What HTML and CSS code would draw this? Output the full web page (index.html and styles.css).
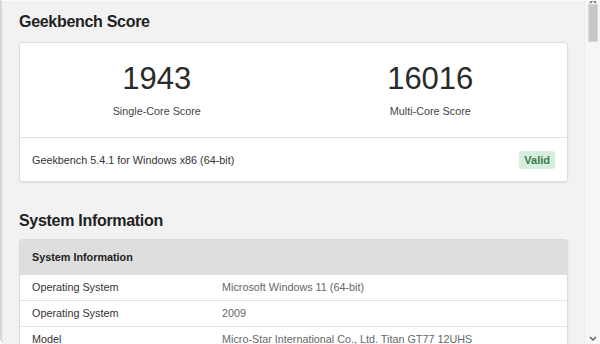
FILE: index.html
```html
<!DOCTYPE html>
<html lang="en">
<head>
  <meta charset="UTF-8">
  <title>Geekbench Score</title>
  <link rel="stylesheet" href="styles.css">
</head>
<body>
  <div class="window">
    <div class="page">
      <h2 class="section-title">Geekbench Score</h2>
      <div class="card">
        <div class="scores">
          <div class="score">
            <div class="score-value">1943</div>
            <div class="score-label">Single-Core Score</div>
          </div>
          <div class="score">
            <div class="score-value">16016</div>
            <div class="score-label">Multi-Core Score</div>
          </div>
        </div>
        <div class="card-footer">
          <span>Geekbench 5.4.1 for Windows x86 (64-bit)</span>
          <span class="badge">Valid</span>
        </div>
      </div>

      <h2 class="section-title second">System Information</h2>
      <div class="card info">
        <div class="info-head">System Information</div>
        <div class="info-row">
          <div class="info-name">Operating System</div>
          <div class="info-value">Microsoft Windows 11 (64-bit)</div>
        </div>
        <div class="info-row">
          <div class="info-name">Operating System</div>
          <div class="info-value">2009</div>
        </div>
        <div class="info-row">
          <div class="info-name">Model</div>
          <div class="info-value">Micro-Star International Co., Ltd. Titan GT77 12UHS</div>
        </div>
      </div>
    </div>
    <div class="scrollbar">
      <svg class="arrow" width="8" height="5" viewBox="0 0 8 5"><path d="M1 4 L4 1 L7 4" fill="none" stroke="#555" stroke-width="1.3"/></svg>
      <div class="thumb"></div>
      <div class="track"></div>
      <svg class="arrow" width="8" height="5" viewBox="0 0 8 5"><path d="M1 1 L4 4 L7 1" fill="none" stroke="#555" stroke-width="1.3"/></svg>
    </div>
  </div>
</body>
</html>
```

FILE: styles.css
```css
html,body{
  margin:0;
  padding:0;
}
body{
  width:600px;
  height:344px;
  overflow:hidden;
  font-family:"Liberation Sans", Arial, sans-serif;
  color:#333;
  background:#fff;
}
.window{
  display:flex;
  height:344px;
  border-left:2px solid #d6d6d6;
  border-top:1px solid #fbfbfb;
  border-bottom-left-radius:6px;
  background:#f2f2f2;
  box-sizing:border-box;
  overflow:hidden;
}
.page{
  flex:1;
  padding:11px 16px 0 17px;
  min-width:0;
}
.section-title{
  margin:0 0 10px;
  font-size:16px;
  line-height:20px;
  letter-spacing:-0.3px;
  font-weight:bold;
  color:#222;
}
.section-title.second{
  margin-top:29px;
  margin-bottom:8px;
}
.card{
  background:#fff;
  border:1px solid #dcdcdc;
  border-radius:3px;
  box-shadow:0 1px 2px rgba(0,0,0,.08);
}
.scores{
  display:grid;
  grid-template-columns:1fr 1fr;
  padding:18px 0;
  border-bottom:1px solid #e2e2e2;
}
.score{
  text-align:center;
}
.score-value{
  font-size:31px;
  line-height:36px;
  color:#2a2a2a;
}
.score-label{
  margin-top:6px;
  font-size:10.8px;
  line-height:16px;
  color:#444;
}
.card-footer{
  display:flex;
  align-items:center;
  justify-content:space-between;
  height:43px;
  padding:0 12px;
  font-size:10.8px;
  color:#333;
}
.badge{
  background:#d5efdc;
  color:#3b7a4b;
  font-weight:bold;
  font-size:11px;
  line-height:18px;
  padding:0 5px;
  border-radius:3px;
}
.info{
  overflow:hidden;
}
.info-head{
  background:#dedede;
  height:35px;
  line-height:35px;
  padding:0 12px;
  font-size:10.8px;
  font-weight:bold;
  color:#222;
}
.info-row{
  display:grid;
  grid-template-columns:190px 1fr;
  height:25px;
  line-height:25px;
  padding:0 12px;
  font-size:10.8px;
  border-top:1px solid #e3e3e3;
}
.info-row:nth-child(2){
  border-top:none;
}
.info-name{
  color:#333;
}
.info-value{
  color:#666;
}
.scrollbar{
  width:15px;
  display:flex;
  flex-direction:column;
  align-items:center;
  background:#f6f6f6;
  border-left:1px solid #ececec;
}
.arrow{
  flex:none;
  margin:-2px 0 0;
}
.thumb{
  flex:none;
  width:10px;
  height:38px;
  background:#c6c6c6;
  border:1px solid #d8d8d8;
  box-sizing:border-box;
}
.track{
  flex:1;
}
.scrollbar .arrow:last-child{
  margin:0 0 3px;
}
```
